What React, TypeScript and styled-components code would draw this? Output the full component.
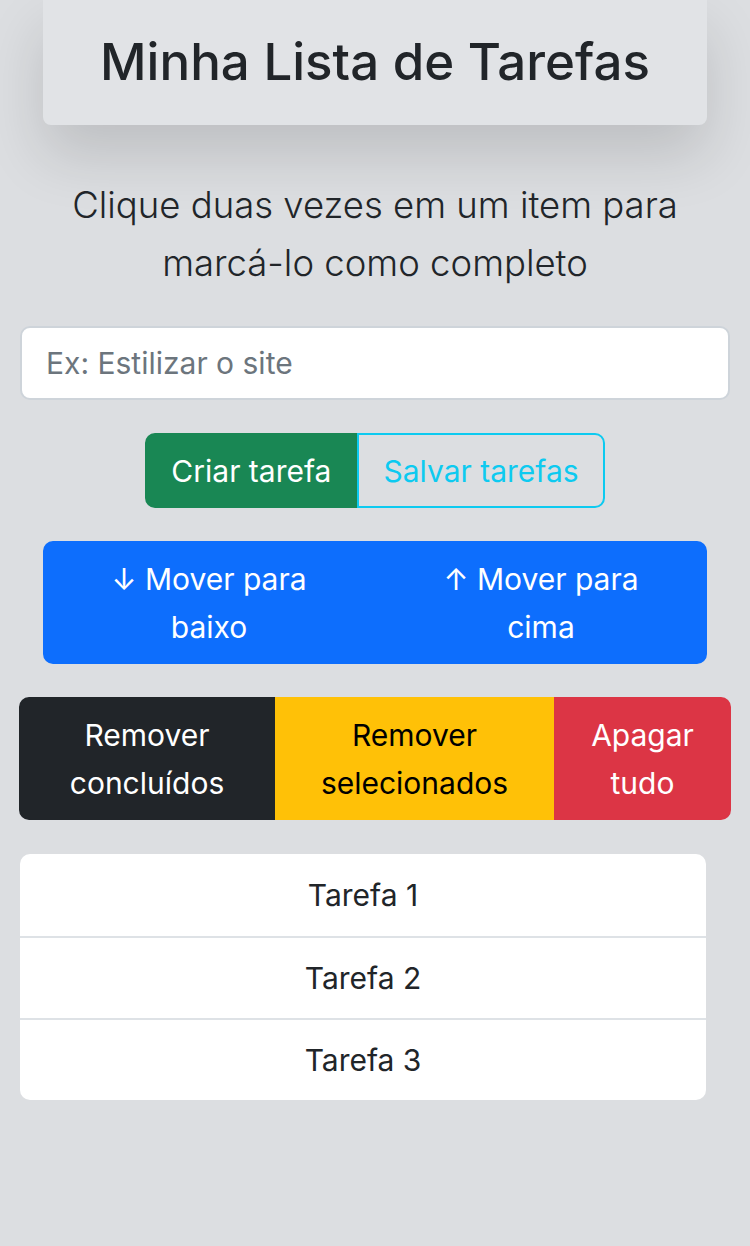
import React from "react";
import styled, { createGlobalStyle } from "styled-components";

const GlobalStyle = createGlobalStyle`
  html, body {
    margin: 0;
    padding: 0;
    background: #dcdee1;
  }
  body {
    font-family: Inter, "Noto Sans", sans-serif;
    color: #212529;
    -webkit-font-smoothing: antialiased;
  }
`;

const tasks = ["Tarefa 1", "Tarefa 2", "Tarefa 3"];

export default function App() {
  return (
    <>
      <GlobalStyle />
      <Page>
        <Header>
          <Title>Minha Lista de Tarefas</Title>
        </Header>
        <Hint>Clique duas vezes em um item para marcá-lo como completo</Hint>
        <Field>
          <Input placeholder="Ex: Estilizar o site" />
        </Field>
        <Centered>
          <Group>
            <Btn $bg="#198754" $fg="#fff" $border="#198754">
              Criar tarefa
            </Btn>
            <Btn $bg="transparent" $fg="#0dcaf0" $border="#0dcaf0">
              Salvar tarefas
            </Btn>
          </Group>
        </Centered>
        <WideGroup $inset={43}>
          <Btn $bg="#0d6efd" $fg="#fff" $border="#0d6efd" $width={332}>
            ↓ Mover para
            <br />
            baixo
          </Btn>
          <Btn $bg="#0d6efd" $fg="#fff" $border="#0d6efd" $width={332}>
            ↑ Mover para
            <br />
            cima
          </Btn>
        </WideGroup>
        <WideGroup $inset={19}>
          <Btn $bg="#212529" $fg="#fff" $border="#212529" $width={256}>
            Remover
            <br />
            concluídos
          </Btn>
          <Btn $bg="#ffc107" $fg="#000" $border="#ffc107" $width={279}>
            Remover
            <br />
            selecionados
          </Btn>
          <Btn $bg="#dc3545" $fg="#fff" $border="#dc3545" $width={177}>
            Apagar
            <br />
            tudo
          </Btn>
        </WideGroup>
        <List>
          {tasks.map((t) => (
            <Item key={t}>{t}</Item>
          ))}
        </List>
      </Page>
    </>
  );
}

const Page = styled.div`
  display: flex;
  flex-direction: column;
  min-height: 1246px;
  box-sizing: border-box;
`;

const Header = styled.header`
  margin: 0 43px;
  height: 125px;
  display: flex;
  align-items: center;
  justify-content: center;
  background: #e1e3e6;
  border-radius: 0 0 8px 8px;
  box-shadow: 0 30px 60px rgba(0, 0, 0, 0.14);
`;

const Title = styled.h1`
  margin: 0 0 2px;
  font-size: 51px;
  font-weight: 500;
  color: #212529;
`;

const Hint = styled.p`
  margin: 51px 43px 0;
  text-align: center;
  font-size: 36.5px;
  font-weight: 300;
  line-height: 58px;
  color: #212529;
`;

const Field = styled.div`
  margin: 34px 20px 0;
`;

const Input = styled.input`
  display: block;
  width: 100%;
  box-sizing: border-box;
  height: 74px;
  padding: 0 24px;
  font-family: inherit;
  font-size: 30px;
  color: #212529;
  background: #fff;
  border: 2px solid #ced4da;
  border-radius: 10px;
  outline: none;
  &::placeholder {
    color: #6c757d;
  }
`;

const Centered = styled.div`
  margin-top: 33px;
  display: flex;
  justify-content: center;
`;

const Group = styled.div`
  display: inline-flex;
  height: 75px;
  & > button {
    padding: 0 24px;
  }
  & > button:first-child {
    border-radius: 10px 0 0 10px;
  }
  & > button:last-child {
    border-radius: 0 10px 10px 0;
  }
`;

const WideGroup = styled.div<{ $inset: number }>`
  margin: 33px ${(p) => p.$inset}px 0;
  display: flex;
  height: 123px;
  & > button:first-child {
    border-radius: 10px 0 0 10px;
  }
  & > button:last-child {
    border-radius: 0 10px 10px 0;
  }
`;

const Btn = styled.button<{
  $bg: string;
  $fg: string;
  $border: string;
  $width?: number;
}>`
  ${(p) => (p.$width ? `flex: 0 0 ${p.$width}px;` : "")}
  display: flex;
  align-items: center;
  justify-content: center;
  box-sizing: border-box;
  margin: 0;
  padding: 12px 20px;
  font-family: inherit;
  font-size: 30px;
  font-weight: 400;
  line-height: 48px;
  text-align: center;
  color: ${(p) => p.$fg};
  background: ${(p) => p.$bg};
  border: 2px solid ${(p) => p.$border};
  border-radius: 0;
  cursor: pointer;
`;

const List = styled.ul`
  margin: 34px 0 0 20px;
  width: 686px;
  padding: 0;
  list-style: none;
  background: #fff;
  border-radius: 10px;
  overflow: hidden;
`;

const Item = styled.li`
  height: 82px;
  box-sizing: border-box;
  display: flex;
  align-items: center;
  justify-content: center;
  font-size: 30px;
  color: #212529;
  & + & {
    border-top: 2px solid #dee2e6;
  }
`;
